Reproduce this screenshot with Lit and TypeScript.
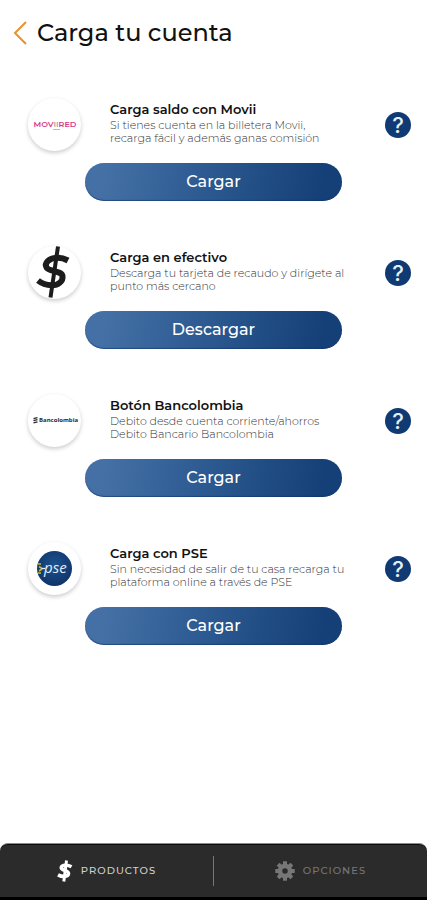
import { LitElement, html, css, svg } from "lit";
import { customElement, property } from "lit/decorators.js";

type Brand = "movired" | "cash" | "bancolombia" | "pse";

interface Method {
  brand: Brand;
  title: string;
  text: string;
  action: string;
}

const METHODS: Method[] = [
  {
    brand: "movired",
    title: "Carga saldo con Movii",
    text: "Si tienes cuenta en la billetera Movii,\nrecarga fácil y además ganas comisión",
    action: "Cargar",
  },
  {
    brand: "cash",
    title: "Carga en efectivo",
    text: "Descarga tu tarjeta de recaudo y dirígete al\npunto más cercano",
    action: "Descargar",
  },
  {
    brand: "bancolombia",
    title: "Botón Bancolombia",
    text: "Debito desde cuenta corriente/ahorros\nDebito Bancario Bancolombia",
    action: "Cargar",
  },
  {
    brand: "pse",
    title: "Carga con PSE",
    text: "Sin necesidad de salir de tu casa recarga tu\nplataforma online a través de PSE",
    action: "Cargar",
  },
];

const GEAR_TEETH = [0, 45, 90, 135, 180, 225, 270, 315];

@customElement("brand-logo")
export class BrandLogo extends LitElement {
  @property() brand: Brand = "cash";

  static styles = css`
    :host {
      display: block;
      width: 53px;
      height: 53px;
      border-radius: 50%;
      background: #fff;
      box-shadow: 0 2px 4px rgba(0, 0, 0, 0.2);
    }
    svg {
      display: block;
      width: 53px;
      height: 53px;
      overflow: visible;
      font-family: Montserrat, Inter, "Liberation Sans", sans-serif;
    }
    .movired {
      font-size: 8px;
      font-weight: 600;
      fill: #d93a84;
    }
    .bancolombia {
      font-size: 6px;
      font-weight: 700;
      fill: #2a2a2a;
      font-family: "Open Sans", "Noto Sans", sans-serif;
    }
    .pse {
      font-family: "Open Sans", "Noto Sans", sans-serif;
      font-size: 15px;
      font-style: italic;
      font-weight: 500;
      fill: #e4edf8;
    }
  `;

  private art() {
    switch (this.brand) {
      case "movired":
        return svg`
          <text class="movired" x="27" y="29" text-anchor="middle">MOV<tspan fill="#a9a4ae">II</tspan>RED</text>
          <path d="M25 31.500h7" stroke="#bbb" stroke-width="1"/>`;
      case "cash":
        return svg`
          <g fill="none" stroke="#1c1c1c">
            <path d="M40 14.500C36 12.300 32 11.500 28.500 11.700C21 12 16 17.500 18.500 21.500C21 25.800 33.500 24.600 34.500 30C35.300 35.500 30 39.500 23.500 39.300C18.500 39.200 13.500 37.300 10 34.500" stroke-width="6"/>
            <path d="M30 0.500L22.500 51.500" stroke-width="4"/>
          </g>`;
      case "bancolombia":
        return svg`
          <path d="M5.500 24.600l4-1M5.500 26.700l4-1M5.500 28.800l4-1" stroke="#2a2a2a" stroke-width="1.300"/>
          <text class="bancolombia" x="11" y="28">Bancolombia</text>`;
      case "pse":
        return svg`
          <defs>
            <radialGradient id="disc" cx="50%" cy="40%" r="60%">
              <stop offset="0" stop-color="#1d5291"/>
              <stop offset="1" stop-color="#0f3468"/>
            </radialGradient>
          </defs>
          <circle cx="26.500" cy="26.500" r="17.500" fill="url(#disc)"/>
          <path d="M10 22h3M10 31h3M11 24.500l3 2M11 29l3-2" stroke="#c3b93c" stroke-width="1.600"/>
          <path d="M13.500 26.500h4" stroke="#e4edf8" stroke-width="1.300"/>
          <text class="pse" x="16" y="31">pse</text>`;
    }
  }

  render() {
    return html`<svg viewBox="0 0 53 53" aria-hidden="true">${this.art()}</svg>`;
  }
}

@customElement("load-method")
export class LoadMethod extends LitElement {
  @property({ attribute: false }) method!: Method;

  static styles = css`
    :host {
      display: flex;
      flex-direction: column;
      align-items: center;
      gap: 12px;
    }
    .summary {
      align-self: stretch;
      display: flex;
      align-items: center;
      padding: 0 16px 0 28px;
    }
    .copy {
      flex: 1;
      margin-left: 29px;
      padding-bottom: 4px;
    }
    h2 {
      margin: 0;
      font-size: 13px;
      line-height: 16px;
      font-weight: 600;
      color: #111;
    }
    p {
      margin: 2px 0 0;
      font-size: 11px;
      line-height: 13px;
      font-weight: 300;
      color: #333;
      white-space: pre-line;
    }
    button {
      border: 0;
      padding: 0;
      font-family: inherit;
      color: #fff;
      cursor: pointer;
    }
    .help {
      flex: none;
      width: 26px;
      height: 26px;
      border-radius: 50%;
      background: #103a73;
      color: #e6eef8;
      font-family: Inter, "Liberation Sans", sans-serif;
      font-size: 22px;
      line-height: 26px;
      font-weight: 500;
    }
    .action {
      width: 60%;
      height: 38px;
      border-radius: 19px;
      background: linear-gradient(100deg, #4470a5 8%, #2a588f 50%, #153f77 92%);
      box-shadow: inset 0 -1px 1px rgba(14, 54, 108, 0.6);
      font-size: 16px;
      line-height: 36px;
      font-weight: 500;
    }
  `;

  render() {
    const { brand, title, text, action } = this.method;
    return html`
      <div class="summary">
        <brand-logo .brand=${brand}></brand-logo>
        <div class="copy">
          <h2>${title}</h2>
          <p>${text}</p>
        </div>
        <button class="help" aria-label="Ayuda: ${title}">?</button>
      </div>
      <button class="action">${action}</button>
    `;
  }
}

@customElement("app-root")
export class AppRoot extends LitElement {
  static styles = css`
    :host {
      display: flex;
      flex-direction: column;
      min-height: 100vh;
      background: #fff;
      font-family: Montserrat, Inter, "Liberation Sans", sans-serif;
    }
    header {
      display: flex;
      align-items: center;
      gap: 9px;
      height: 66px;
      padding: 0 13px;
    }
    .back {
      display: flex;
      border: 0;
      padding: 0;
      background: none;
      cursor: pointer;
    }
    h1 {
      margin: 0;
      font-size: 24px;
      line-height: 32px;
      font-weight: 500;
      color: #111;
    }
    main {
      flex: 1;
      display: flex;
      flex-direction: column;
      gap: 45px;
      padding: 32px 0;
    }
    nav {
      display: flex;
      align-items: center;
      height: 53px;
      border-top: 1px solid #8a8a8a;
      border-bottom: 3px solid #000;
      border-radius: 8px 8px 0 0;
      background: #2b2b2b;
      box-shadow: inset 0 1px 0 #0c0c0c;
    }
    nav a {
      flex: 1;
      display: flex;
      align-items: center;
      justify-content: center;
      gap: 8px;
      font-size: 10px;
      line-height: 16px;
      font-weight: 500;
      letter-spacing: 1px;
      text-decoration: none;
      color: #777;
    }
    nav a.current {
      color: #d2d2d2;
    }
    .rule {
      width: 1px;
      height: 30px;
      background: #777;
    }
  `;

  render() {
    return html`
      <header>
        <button class="back" aria-label="Volver">
          <svg width="15" height="26" viewBox="0 0 15 26" fill="none" stroke="#e8912d" stroke-width="2">
            <path d="M13 2L2 13L13 24" />
          </svg>
        </button>
        <h1>Carga tu cuenta</h1>
      </header>
      <main>${METHODS.map((m) => html`<load-method .method=${m}></load-method>`)}</main>
      <nav>
        <a class="current" href="#productos">
          <svg width="16" height="22" viewBox="0 0 16 22" fill="none" stroke="#fff" aria-hidden="true">
            <path
              d="M14.500 6.800C11 4.800 5 4.500 4.300 7.500C3.800 11 12 9.800 11.500 13.800C11 17.200 5 17 1 14.800"
              stroke-width="3.600"
            />
            <path d="M9.500 0.500L6.800 21.500" stroke-width="3" />
          </svg>
          PRODUCTOS
        </a>
        <span class="rule"></span>
        <a href="#opciones">
          <svg width="20" height="20" viewBox="-10 -10 20 20" fill="none" stroke="#777" aria-hidden="true">
            <circle r="5" stroke-width="4.500" />
            ${GEAR_TEETH.map((a) => svg`<path d="M0 -6V-9.700" stroke-width="4" transform="rotate(${a})"/>`)}
          </svg>
          OPCIONES
        </a>
      </nav>
    `;
  }
}
